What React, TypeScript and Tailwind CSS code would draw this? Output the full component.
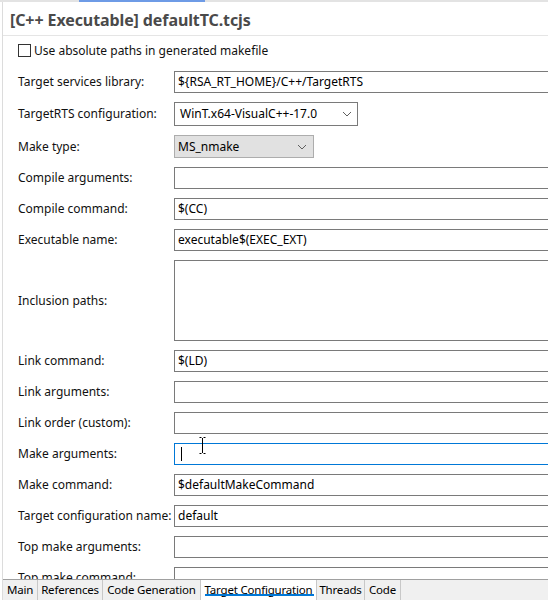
import type { ReactNode } from 'react'

const font = { fontFamily: '"Noto Sans", "Open Sans", sans-serif' }

function Chevron() {
  return (
    <svg width="10" height="6" viewBox="0 0 10 6" className="shrink-0">
      <path d="M1 1 L5 5 L9 1" fill="none" stroke="#5f5f5f" strokeWidth="1" />
    </svg>
  )
}

function Row({ label, children }: { label: string; children: ReactNode }) {
  return (
    <div className="flex items-center">
      <div className="w-[171px] shrink-0 pl-[15px] text-[12px] text-[#111] whitespace-nowrap">{label}</div>
      {children}
    </div>
  )
}

function TextField({ value = '', focused = false }: { value?: string; focused?: boolean }) {
  return (
    <div
      className={
        focused
          ? 'relative h-[22px] w-[420px] shrink-0 border border-[#0078d7] bg-white flex items-center pl-[6px] text-[12px] text-black'
          : 'h-[22px] w-[420px] shrink-0 border border-[#7a7a7a] bg-white flex items-center pl-[3px] text-[12px] text-black whitespace-nowrap'
      }
    >
      {focused ? <span className="block w-px h-[14px] bg-black" /> : value}
    </div>
  )
}

const tabs = [
  { name: 'Main', w: 'w-[35px]' },
  { name: 'References', w: 'w-[65px]' },
  { name: 'Code Generation', w: 'w-[98px]' },
  { name: 'Target Configuration', w: 'w-[116px]', active: true },
  { name: 'Threads', w: 'w-[48px]' },
  { name: 'Code', w: 'w-[36px]' },
]

export default function App() {
  return (
    <div className="relative w-[548px] h-[600px] overflow-hidden bg-white flex flex-col" style={font}>
      {/* top edge */}
      <div className="h-[2px] shrink-0 bg-[#e3e3e3] flex">
        <div className="ml-[79px] w-[126px] h-full bg-[#6e9be6]" />
      </div>

      <div className="flex-1 min-h-0 ml-[2px] border-l border-[#dcdcdc] flex flex-col">
        {/* Title */}
        <div className="h-[33px] shrink-0 flex items-center pl-[7px] pt-[2px]">
          <h1 className="text-[16px] font-bold text-[#4a4a4a] tracking-[-0.1px]">[C++ Executable] defaultTC.tcjs</h1>
        </div>
        <div className="h-px shrink-0 bg-[#e5e5e5]" />

        {/* Checkbox */}
        <div className="flex items-center pl-[15px] pt-[8px] h-[21px] shrink-0">
          <div className="w-[13px] h-[13px] border border-[#333] bg-white shrink-0" />
          <span className="ml-[3px] text-[12px] text-[#111]">Use absolute paths in generated makefile</span>
        </div>

        {/* Form */}
        <div className="flex-1 min-h-0 overflow-hidden pt-[14px] flex flex-col gap-[9px]">
          <Row label="Target services library:">
            <TextField value="${RSA_RT_HOME}/C++/TargetRTS" />
          </Row>
          <Row label="TargetRTS configuration:">
            <div className="h-[24px] w-[184px] shrink-0 border border-[#7a7a7a] bg-white flex items-center justify-between pl-[5px] pr-[5px] text-[12px] text-black">
              <span>WinT.x64-VisualC++-17.0</span>
              <Chevron />
            </div>
          </Row>
          <Row label="Make type:">
            <div className="h-[23px] w-[140px] shrink-0 border border-[#adadad] bg-[#e1e1e1] flex items-center justify-between pl-[3px] pr-[6px] text-[12px] text-black">
              <span>MS_nmake</span>
              <Chevron />
            </div>
          </Row>
          <Row label="Compile arguments:">
            <TextField />
          </Row>
          <Row label="Compile command:">
            <TextField value="$(CC)" />
          </Row>
          <Row label="Executable name:">
            <TextField value="executable$(EXEC_EXT)" />
          </Row>
          <Row label="Inclusion paths:">
            <div className="h-[81px] w-[420px] shrink-0 border border-[#7a7a7a] bg-white" />
          </Row>
          <Row label="Link command:">
            <TextField value="$(LD)" />
          </Row>
          <Row label="Link arguments:">
            <TextField />
          </Row>
          <Row label="Link order (custom):">
            <TextField />
          </Row>
          <Row label="Make arguments:">
            <TextField focused />
          </Row>
          <Row label="Make command:">
            <TextField value="$defaultMakeCommand" />
          </Row>
          <Row label="Target configuration name:">
            <TextField value="default" />
          </Row>
          <Row label="Top make arguments:">
            <TextField />
          </Row>
          <Row label="Top make command:">
            <TextField />
          </Row>
        </div>

        {/* Tabs */}
        <div className="h-[21px] shrink-0 border-t border-[#a0a0a0] bg-[#f0f0f0] flex">
          {tabs.map((t) => (
            <div
              key={t.name}
              className={
                t.active
                  ? `${t.w} relative h-full bg-white border-r border-[#c8c8c8] flex items-center justify-center text-[11.5px] tracking-[-0.2px] text-black whitespace-nowrap`
                  : `${t.w} h-full border-r border-[#c8c8c8] flex items-center justify-center text-[11.5px] tracking-[-0.2px] text-black whitespace-nowrap`
              }
            >
              {t.name}
              {t.active && <span className="absolute left-[4px] right-[2px] bottom-[4px] h-[2px] bg-[#0078d7]" />}
            </div>
          ))}
        </div>
      </div>

      {/* mouse I-beam */}
      <svg className="absolute left-[199px] top-[437px]" width="7" height="17" viewBox="0 0 7 17">
        <path d="M0.5 0.5 H2.5 M4.5 0.5 H6.5 M3.5 1 V16 M0.5 16.5 H2.5 M4.5 16.5 H6.5" stroke="#000" strokeWidth="1" fill="none" />
      </svg>
    </div>
  )
}
